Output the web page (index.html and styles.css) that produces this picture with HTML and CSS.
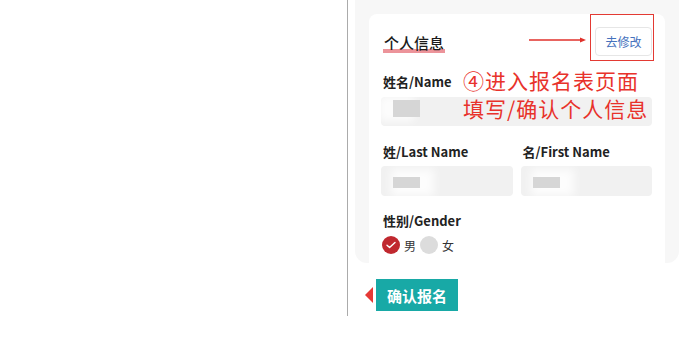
FILE: index.html
```html
<!DOCTYPE html>
<html lang="zh-CN">
<head>
    <meta charset="UTF-8">
    <meta name="viewport" content="width=device-width, initial-scale=1.0">
    <title>报名表 - 个人信息</title>
    <link rel="stylesheet" href="styles.css">
</head>
<body>
    <div class="page">
        <div class="blank"></div>
        <div class="column">
            <div class="panel">
                <div class="card">
                    <div class="card-header">
                        <span class="card-title">个人信息</span>
                        <button class="edit-button">去修改</button>
                    </div>

                    <div class="field">
                        <div class="field-label">姓名/Name</div>
                        <div class="input"><span class="mask"></span></div>
                    </div>

                    <div class="field field-row">
                        <div class="field-col">
                            <div class="field-label">姓/Last Name</div>
                            <div class="input tall"><span class="mask mask-low"></span></div>
                        </div>
                        <div class="field-col">
                            <div class="field-label">名/First Name</div>
                            <div class="input tall"><span class="mask mask-low"></span></div>
                        </div>
                    </div>

                    <div class="field">
                        <div class="field-label">性别/Gender</div>
                        <div class="radios">
                            <span class="radio checked">
                                <svg viewBox="0 0 18 18"><path d="M5 9.2l2.6 2.4L13 6.4" fill="none" stroke="#fff" stroke-width="1.4" stroke-linecap="round" stroke-linejoin="round"/></svg>
                            </span>
                            <span class="radio-text">男</span>
                            <span class="radio"></span>
                            <span class="radio-text">女</span>
                        </div>
                    </div>

                    <!-- annotation drawn over the screenshot -->
                    <div class="mark-box"></div>
                    <svg class="mark-arrow" viewBox="0 0 58 8"><path d="M0 4H52" stroke="#e0312b" stroke-width="1.4"/><path d="M51 1.5L57 4L51 6.5Z" fill="#e0312b"/></svg>
                    <div class="mark-text">
                        <div class="wide">④进入报名表页面</div>
                        <div class="wide">填写/确认个人信息</div>
                    </div>
                </div>
            </div>
            <div class="actions">
                <span class="pointer"></span>
                <button class="confirm-button">确认报名</button>
            </div>
        </div>
    </div>
</body>
</html>
```

FILE: styles.css
```css
body {
    margin: 0;
    background-color: #fff;
    font-family: "Noto Sans CJK SC", "Noto Sans", sans-serif;
    color: #222;
}
.page {
    display: flex;
}
.blank {
    width: 347px;
    flex-shrink: 0;
}
.column {
    border-left: 1px solid #ababab;
    height: 316px;
    padding-left: 7px;
}
.panel {
    width: 324px;
    height: 263px;
    box-sizing: border-box;
    padding: 14px 14px 0;
    background-color: #f7f7f7;
    border-radius: 0 0 12px 12px;
}
.card {
    position: relative;
    height: 249px;
    box-sizing: border-box;
    padding: 13px 13px 0 12px;
    background-color: #fff;
    border-radius: 8px 8px 0 0;
}
.card-header {
    display: flex;
    justify-content: space-between;
    align-items: center;
    height: 29px;
}
.card-title {
    margin-left: 2px;
    margin-top: 5px;
    padding: 0 1px 3px;
    font-size: 15px;
    line-height: 15px;
    font-weight: 500;
    color: #1a1a1a;
    background: linear-gradient(to top, rgba(226, 90, 100, 0.65) 4px, transparent 4px);
}
.edit-button {
    height: 29px;
    width: 57px;
    padding: 0;
    background-color: #fff;
    border: 1px solid #e6e6e6;
    border-radius: 4px;
    font-family: inherit;
    font-size: 12px;
    color: #4672bd;
}
.field {
    margin-top: 17px;
}
.field-label {
    padding-left: 2px;
    font-size: 13px;
    line-height: 18px;
    font-weight: 700;
    color: #222;
}
.input {
    position: relative;
    height: 29px;
    margin-top: 6px;
    background-color: #f1f1f1;
    border-radius: 4px;
    overflow: hidden;
}
.input.tall {
    height: 30px;
    margin-top: 5px;
}
.mask {
    position: absolute;
    left: 12px;
    top: 3px;
    width: 27px;
    height: 17px;
    background-color: #d6d6d6;
    box-shadow: -10px 0 8px 4px rgba(255, 255, 255, 0.8);
    filter: blur(0.6px);
}
.mask-low {
    top: 11px;
    height: 11px;
    box-shadow: 6px 0 10px 8px rgba(255, 255, 255, 0.85);
}
.field-row {
    display: flex;
    gap: 8px;
}
.field-col {
    flex: 1;
}
.field-row + .field {
    margin-top: 16px;
}
.radios {
    display: flex;
    align-items: center;
    margin-top: 6px;
    margin-left: 1px;
}
.radio {
    width: 18px;
    height: 18px;
    border-radius: 50%;
    background-color: #dcdcdc;
    display: flex;
}
.radio.checked {
    background-color: #c0282f;
}
.radio svg {
    width: 18px;
    height: 18px;
}
.radio-text {
    margin: 0 4px;
    font-size: 12px;
    color: #333;
}
.mark-box {
    position: absolute;
    left: 221px;
    top: 0;
    width: 62px;
    height: 45px;
    border: 1.5px solid #e33a33;
}
.mark-arrow {
    position: absolute;
    left: 160px;
    top: 22px;
    width: 58px;
    height: 8px;
}
.mark-text {
    position: absolute;
    left: 94px;
    top: 52px;
    font-size: 21px;
    line-height: 28px;
    color: #e8322b;
}
.mark-text .wide {
    letter-spacing: 1px;
}
.actions {
    display: flex;
    align-items: center;
    margin-top: 16px;
    padding-left: 10px;
}
.pointer {
    width: 0;
    height: 0;
    border-top: 8px solid transparent;
    border-bottom: 8px solid transparent;
    border-right: 8px solid #e53935;
    margin-right: 3px;
}
.confirm-button {
    height: 32px;
    width: 82px;
    padding: 0;
    border: none;
    background-color: #18a9a6;
    font-family: inherit;
    font-size: 15px;
    font-weight: 700;
    color: #fff;
}
```
